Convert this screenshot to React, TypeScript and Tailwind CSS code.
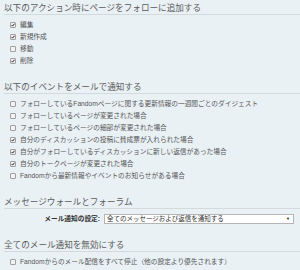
const font = { fontFamily: '"Liberation Sans", "Noto Sans CJK JP", sans-serif' };

const Box = ({ checked }: { checked: boolean }) => (
    <span className="flex h-[6px] w-[6px] shrink-0 items-center justify-center rounded-[1px] border border-[#a0a0a0] bg-[#f2f2f2]">
        {checked && (
            <svg viewBox="0 0 10 10" className="h-[6px] w-[6px]">
                <path d="M1.5 5 L4 7.8 L8.8 1.8" fill="none" stroke="#1a1a1a" strokeWidth="2.4" />
            </svg>
        )}
    </span>
);

const Item = ({ label, checked }: { label: string; checked: boolean }) => (
    <li className="flex h-[12px] items-center gap-[4px] pl-[6px]">
        <Box checked={checked} />
        <span className="whitespace-nowrap text-[6.7px] leading-[12px] text-[#555]">{label}</span>
    </li>
);

const Heading = ({ children, first }: { children: string; first?: boolean }) => (
    <h2
        className={`${first ? 'pt-[2px]' : 'mt-[14px]'} whitespace-nowrap border-b border-[#d3dadd] text-[8.6px] leading-[12px] text-[#5b5b5b]`}
    >
        {children}
    </h2>
);

const actions = [
    { label: '編集', checked: true },
    { label: '新規作成', checked: true },
    { label: '移動', checked: false },
    { label: '削除', checked: true },
];

const events = [
    { label: 'フォローしているFandomページに関する更新情報の一週間ごとのダイジェスト', checked: false },
    { label: 'フォローしているページが変更された場合', checked: false },
    { label: 'フォローしているページの細部が変更された場合', checked: false },
    { label: '自分のディスカッションの投稿に賛成票が入れられた場合', checked: true },
    { label: '自分がフォローしているディスカッションに新しい返信があった場合', checked: true },
    { label: '自分のトークページが変更された場合', checked: true },
    { label: 'Fandomから最新情報やイベントのお知らせがある場合', checked: false },
];

export default function App() {
    return (
        <div className="h-[270px] w-[300px] overflow-hidden bg-[#e9f1f5] pl-[4px]" style={font}>
            {/* follow on actions */}
            <Heading first>以下のアクション時にページをフォローに追加する</Heading>
            <ul className="mt-[4px]">
                {actions.map((a) => (
                    <Item key={a.label} {...a} />
                ))}
            </ul>

            {/* email events */}
            <Heading>以下のイベントをメールで通知する</Heading>
            <ul className="mt-[4px]">
                {events.map((e) => (
                    <Item key={e.label} {...e} />
                ))}
            </ul>

            {/* message wall */}
            <Heading>メッセージウォールとフォーラム</Heading>
            <div className="mt-[4px] flex h-[12px] items-center gap-[4px]">
                <span className="w-[96px] whitespace-nowrap text-right text-[6.7px] font-bold text-[#333]">
                    メール通知の設定:
                </span>
                <div className="flex h-[10px] w-[190px] items-center justify-between border border-[#b5b5b5] bg-white pl-[2px] pr-[3px]">
                    <span className="whitespace-nowrap text-[6.5px] leading-[8px] text-[#333]">
                        全てのメッセージおよび返信を通知する
                    </span>
                    <span className="text-[4px] leading-none text-[#111]">▼</span>
                </div>
            </div>

            {/* disable all */}
            <Heading>全てのメール通知を無効にする</Heading>
            <ul className="mt-[4px]">
                <Item label="Fandomからのメール配信をすべて停止（他の設定より優先されます）" checked={false} />
            </ul>
        </div>
    );
}
